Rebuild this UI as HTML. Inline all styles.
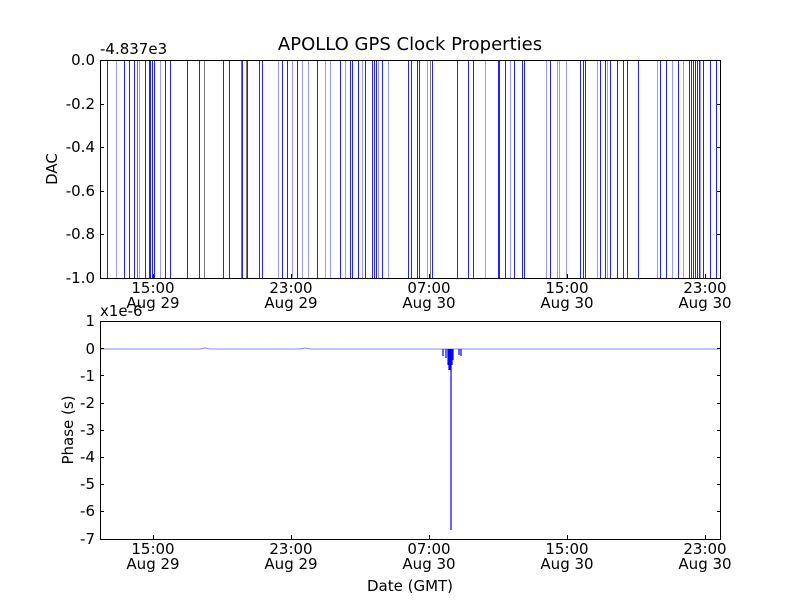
<!DOCTYPE html>
<html><head><meta charset="utf-8"><style>body{margin:0;background:#fff}svg{display:block}text{font-family:"DejaVu Sans","Liberation Sans",sans-serif;fill:#000}</style></head><body>
<svg width="800" height="600" viewBox="0 0 800 600">
<rect width="800" height="600" fill="#fff"/>
<text x="410" y="50" font-size="18" text-anchor="middle">APOLLO GPS Clock Properties</text>
<text x="100" y="54" font-size="15">-4.837e3</text>
<g stroke-width="1" shape-rendering="crispEdges">
<g stroke="#777">
<line x1="137.5" y1="60" x2="137.5" y2="278"/><line x1="204.5" y1="60" x2="204.5" y2="278"/><line x1="241.5" y1="60" x2="241.5" y2="278"/><line x1="246.5" y1="60" x2="246.5" y2="278"/><line x1="430.5" y1="60" x2="430.5" y2="278"/>
</g>
<g stroke="#22f">
<path d="M107.5 60V278M124.5 60V278M129.5 60V278M134.5 60V278M145.5 60V278M149.5 60V278M150.5 60V278M152.5 60V278M154.5 60V278M165.5 60V278M170.5 60V278M187.5 60V278M199.5 60V278M223.5 60V278M229.5 60V278M242.5 60V278M247.5 60V278M259.5 60V278M262.5 60V278M282.5 60V278M287.5 60V278M297.5 60V278M317.5 60V278M340.5 60V278M350.5 60V278M352.5 60V278M358.5 60V278M365.5 60V278M372.5 60V278M374.5 60V278M376.5 60V278M382.5 60V278M408.5 60V278M411.5 60V278M417.5 60V278M419.5 60V278M432.5 60V278M457.5 60V278M468.5 60V278M473.5 60V278M498.5 60V278M499.5 60V278M505.5 60V278M514.5 60V278M522.5 60V278M524.5 60V278M550.5 60V278M580.5 60V278M583.5 60V278M585.5 60V278M600.5 60V278M605.5 60V278M610.5 60V278M617.5 60V278M623.5 60V278M627.5 60V278M638.5 60V278M660.5 60V278M666.5 60V278M678.5 60V278M689.5 60V278M691.5 60V278M693.5 60V278M695.5 60V278M697.5 60V278M699.5 60V278M703.5 60V278M710.5 60V278M716.5 60V278"/>
</g>
<g stroke="#99f">
<path d="M116.5 60V278M139.5 60V278M160.5 60V278M278.5 60V278M292.5 60V278M302.5 60V278M308.5 60V278M325.5 60V278M330.5 60V278M345.5 60V278M362.5 60V278M378.5 60V278M388.5 60V278M427.5 60V278M485.5 60V278M510.5 60V278M546.5 60V278M557.5 60V278M559.5 60V278M566.5 60V278M597.5 60V278M607.5 60V278M657.5 60V278M672.5 60V278M683.5 60V278M700.5 60V278"/>
</g>
</g>
<rect x="100.5" y="60.5" width="620" height="218" fill="none" stroke="#000"/>
<g stroke="#000" shape-rendering="crispEdges">
<path d="M100 104.5h4M100 147.5h4M100 191.5h4M100 234.5h4M717 104.5h4M717 147.5h4M717 191.5h4M717 234.5h4M153.5 278v-4M291.5 278v-4M429.5 278v-4M567.5 278v-4M705.5 278v-4"/>
</g>
<g font-size="15" text-anchor="end">
<text x="95" y="65">0.0</text><text x="95" y="109">-0.2</text><text x="95" y="152">-0.4</text><text x="95" y="196">-0.6</text><text x="95" y="239">-0.8</text><text x="95" y="283">-1.0</text>
</g>
<text transform="translate(57,169) rotate(-90)" font-size="15" text-anchor="middle">DAC</text>
<g font-size="15" text-anchor="middle">
<text x="153" y="293">15:00</text><text x="153" y="308">Aug 29</text>
<text x="291" y="293">23:00</text><text x="291" y="308">Aug 29</text>
<text x="429" y="293">07:00</text><text x="429" y="308">Aug 30</text>
<text x="567" y="293">15:00</text><text x="567" y="308">Aug 30</text>
<text x="705" y="293">23:00</text><text x="705" y="308">Aug 30</text>
</g>
<text x="100" y="316" font-size="15">x1e-6</text>
<path d="M100 349 L200 349 L205 348 L210 349 L300 349 L305 348 L310 349 L720 349" stroke="#88f" stroke-width="1" fill="none"/>
<path d="M443 349V356M446 349V358M448 349V365M449 349V370M450 349V370M451 349V530M452 349V365M453 349V360M459 349V355M461 349V356" stroke="#00f" stroke-width="1.2" fill="none"/>
<rect x="100.5" y="321.5" width="620" height="218" fill="none" stroke="#000"/>
<g stroke="#000" shape-rendering="crispEdges">
<path d="M100 348.5h4M100 375.5h4M100 403.5h4M100 430.5h4M100 457.5h4M100 484.5h4M100 511.5h4M717 348.5h4M717 375.5h4M717 403.5h4M717 430.5h4M717 457.5h4M717 484.5h4M717 511.5h4M153.5 539v-4M291.5 539v-4M429.5 539v-4M567.5 539v-4M705.5 539v-4"/>
</g>
<g font-size="15" text-anchor="end">
<text x="95" y="326">1</text><text x="95" y="354">0</text><text x="95" y="381">-1</text><text x="95" y="408">-2</text><text x="95" y="435">-3</text><text x="95" y="462">-4</text><text x="95" y="489">-5</text><text x="95" y="516">-6</text><text x="95" y="544">-7</text>
</g>
<text transform="translate(73,430) rotate(-90)" font-size="15" text-anchor="middle">Phase (s)</text>
<g font-size="15" text-anchor="middle">
<text x="153" y="554">15:00</text><text x="153" y="569">Aug 29</text>
<text x="291" y="554">23:00</text><text x="291" y="569">Aug 29</text>
<text x="429" y="554">07:00</text><text x="429" y="569">Aug 30</text>
<text x="567" y="554">15:00</text><text x="567" y="569">Aug 30</text>
<text x="705" y="554">23:00</text><text x="705" y="569">Aug 30</text>
</g>
<text x="410" y="591" font-size="15" text-anchor="middle">Date (GMT)</text>
</svg>
</body></html>
